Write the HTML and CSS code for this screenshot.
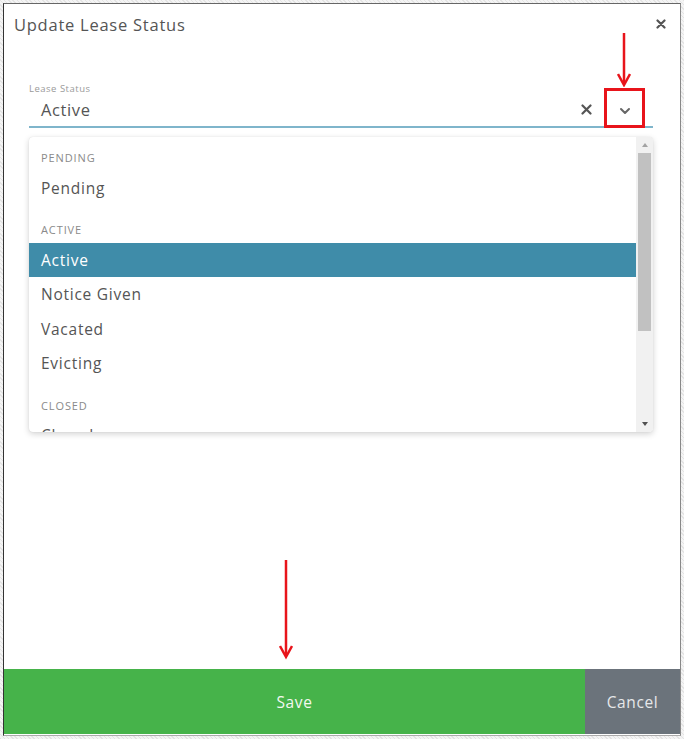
FILE: index.html
```html
<!DOCTYPE html>
<html lang="en">
<head>
<meta charset="utf-8">
<title>Update Lease Status</title>
<link rel="stylesheet" href="styles.css">
</head>
<body>
<div class="frame">
  <div class="modal">
    <div class="modal-header">
      <h1 class="modal-title">Update Lease Status</h1>
      <svg class="close-icon" width="10" height="10" viewBox="0 0 10 10"><path d="M1.5 1.5 L8.5 8.5 M8.5 1.5 L1.5 8.5" stroke="#555" stroke-width="2.2" stroke-linecap="round"/></svg>
    </div>
    <div class="modal-body">
      <div class="field">
        <div class="field-label">Lease Status</div>
        <div class="field-control">
          <span class="field-value">Active</span>
          <span class="field-actions">
            <svg class="clear-icon" width="11" height="11" viewBox="0 0 11 11"><path d="M1.5 1.5 L9.5 9.5 M9.5 1.5 L1.5 9.5" stroke="#555" stroke-width="2.2" stroke-linecap="round"/></svg>
            <span class="chevron-box">
              <svg width="12" height="8" viewBox="0 0 12 8"><path d="M2 2 L6 6 L10 2" fill="none" stroke="#666" stroke-width="2" stroke-linecap="round" stroke-linejoin="round"/></svg>
            </span>
          </span>
        </div>
        <div class="dropdown">
          <div class="options">
            <div class="group first">
              <div class="group-header">Pending</div>
              <div class="option">Pending</div>
            </div>
            <div class="group">
              <div class="group-header">Active</div>
              <div class="option selected">Active</div>
              <div class="option">Notice Given</div>
              <div class="option">Vacated</div>
              <div class="option">Evicting</div>
            </div>
            <div class="group">
              <div class="group-header">Closed</div>
              <div class="option">Closed</div>
            </div>
          </div>
          <div class="scrollbar">
            <span class="sb-arrow up"></span>
            <span class="sb-track"><span class="sb-thumb"></span></span>
            <span class="sb-arrow down"></span>
          </div>
        </div>
      </div>
    </div>
    <div class="modal-footer">
      <button class="btn btn-save">Save</button>
      <button class="btn btn-cancel">Cancel</button>
    </div>
  </div>
  <svg class="annot annot-top" width="14" height="54" viewBox="0 0 14 54"><path d="M7 0 V50" stroke="#e8141b" stroke-width="2.5"/><path d="M1 41 L7 52 L13 41" fill="none" stroke="#e8141b" stroke-width="2.5"/></svg>
  <svg class="annot annot-bottom" width="14" height="100" viewBox="0 0 14 100"><path d="M7 0 V96" stroke="#e8141b" stroke-width="2.5"/><path d="M1 86 L7 97 L13 86" fill="none" stroke="#e8141b" stroke-width="2.5"/></svg>
</div>
</body>
</html>
```

FILE: styles.css
```css
* { box-sizing: border-box; }
html, body { margin: 0; padding: 0; }
body {
  font-family: "Open Sans", "Liberation Sans", sans-serif;
  color: #555;
  letter-spacing: 0.6px;
}
.frame {
  position: relative;
  width: 684px;
  height: 739px;
  padding: 3px;
  background: repeating-linear-gradient(45deg, #e4e4e4 0 1px, #f4f4f4 1px 3px);
}
.modal {
  height: 100%;
  background: #fff;
  border-left: 1px solid #333;
  border-top: 1px solid #666;
  border-right: 1px solid #888;
  border-bottom: 1px solid #aaa;
  display: flex;
  flex-direction: column;
}
.modal-header {
  display: flex;
  justify-content: space-between;
  align-items: center;
  padding: 9px 14px 0 10px;
  height: 33px;
}
.modal-title {
  margin: 0;
  font-size: 16.5px;
  font-weight: 400;
  line-height: 24px;
  color: #555;
  letter-spacing: 0.75px;
}
.close-icon { margin-top: -2px; }
.modal-body {
  flex: 1;
  padding: 45px 27px 0 25px;
}
.field { position: relative; }
.field-label {
  font-size: 9.5px;
  line-height: 14px;
  color: #9a9a9a;
  letter-spacing: 0.5px;
}
.field-control {
  display: flex;
  align-items: center;
  justify-content: space-between;
  height: 32px;
  padding-left: 12px;
  border-bottom: 2px solid #7fb5cb;
}
.field-value {
  font-size: 16.5px;
  color: #555;
  margin-top: -3px;
}
.field-actions {
  display: flex;
  align-items: center;
  gap: 12px;
  padding-right: 8px;
}
.clear-icon { margin-top: -3px; }
.chevron-box {
  width: 41px;
  height: 40px;
  border: 3px solid #e8141b;
  display: flex;
  align-items: center;
  justify-content: center;
  margin-bottom: 6px;
  padding-top: 5px;
}
.dropdown {
  position: absolute;
  top: calc(100% + 9px);
  left: 0;
  right: 0;
  height: 295px;
  background: #fff;
  border-radius: 4px;
  box-shadow: 0 2px 6px rgba(0,0,0,0.18), 0 0 1px rgba(0,0,0,0.15);
  display: flex;
  overflow: hidden;
}
.options {
  flex: 1;
  overflow: hidden;
}
.group { margin-top: 4px; }
.group.first { margin-top: 0; }
.group-header {
  padding: 14px 12px 5.5px;
  font-size: 11px;
  line-height: 14px;
  text-transform: uppercase;
  color: #8a8a8a;
  letter-spacing: 0.9px;
}
.option {
  height: 34.5px;
  display: flex;
  align-items: center;
  padding-left: 12px;
  font-size: 15.5px;
  color: #555;
  letter-spacing: 0.75px;
}
.option.selected {
  background: #3f8ca9;
  color: #fff;
}
.scrollbar {
  width: 17px;
  background: #f1f1f1;
  display: flex;
  flex-direction: column;
  align-items: center;
}
.sb-arrow {
  height: 16px;
  width: 17px;
  display: flex;
  align-items: center;
  justify-content: center;
}
.sb-arrow::before {
  content: "";
  border-left: 3.5px solid transparent;
  border-right: 3.5px solid transparent;
}
.sb-arrow.up::before { border-bottom: 4px solid #a3a3a3; }
.sb-arrow.down::before { border-top: 4px solid #505050; }
.sb-track {
  flex: 1;
  width: 100%;
  padding: 0 2px;
}
.sb-thumb {
  display: block;
  height: 178px;
  background: #c1c1c1;
}
.modal-footer {
  display: flex;
  height: 66px;
  padding-bottom: 1px;
}
.btn {
  border: none;
  font-family: inherit;
  font-size: 15.5px;
  letter-spacing: 0.6px;
  color: #fff;
  height: 65px;
  padding: 0;
}
.btn-save {
  flex: 1;
  background: #46b34a;
  color: #f2f8f0;
}
.btn-cancel {
  width: 95px;
  background: #6b737b;
  color: #e6e8ea;
}
.annot { position: absolute; }
.annot-top { left: 617px; top: 33px; }
.annot-bottom { left: 279px; top: 560px; }
```
